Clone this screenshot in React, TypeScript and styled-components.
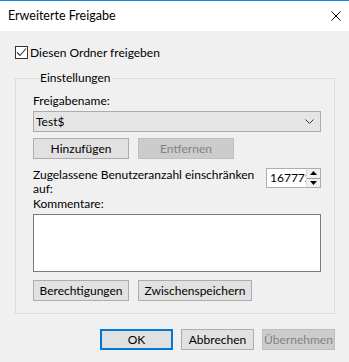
import React from 'react';
import styled, { createGlobalStyle } from 'styled-components';

const GlobalStyle = createGlobalStyle`
    html, body {
        margin: 0;
        padding: 0;
        background: #f0f0f0;
    }
    body {
        font-family: Lato, "Noto Sans", sans-serif;
        font-size: 12px;
        color: #000;
    }
`

const Window = styled.div`
    width: 349px;
    height: 362px;
    box-sizing: border-box;
    border-top: 1px solid #1883d7;
    background: #f0f0f0;
    display: flex;
    flex-direction: column;
`

const TitleBar = styled.div`
    height: 30px;
    background: #fff;
    display: flex;
    align-items: center;
    justify-content: space-between;
    padding: 0 8px;
`

const Title = styled.span`
    font-size: 12.5px;
    line-height: 16px;
`

const CloseIcon = styled.svg`
    width: 10px;
    height: 10px;
`

const Body = styled.div`
    padding: 0 14px 0 15px;
    display: flex;
    flex-direction: column;
`

const CheckRow = styled.label`
    display: flex;
    align-items: center;
    gap: 2px;
    margin-top: 15px;
    height: 13px;
    line-height: 13px;
`

const Box = styled.span`
    width: 13px;
    height: 13px;
    box-sizing: border-box;
    border: 1px solid #333;
    background: #fff;
    display: flex;
    align-items: center;
    justify-content: center;
`

const Group = styled.fieldset`
    margin: 11px 0 0 0;
    width: 320px;
    box-sizing: border-box;
    border: 1px solid #dcdcdc;
    padding: 0 13px 12px 17px;
    display: flex;
    flex-direction: column;
`

const Legend = styled.legend`
    padding: 0 1px;
    margin-left: 6px;
    line-height: 16px;
`

const Label = styled.div<{ $top?: number }>`
    line-height: 16px;
    margin-top: ${p => p.$top ?? 0}px;
`

const Combo = styled.div`
    margin-top: 2px;
    height: 21px;
    box-sizing: border-box;
    border: 1px solid #acacac;
    background: #e5e5e5;
    display: flex;
    align-items: center;
    justify-content: space-between;
    padding: 0 6px 0 2px;
`

const ButtonRow = styled.div<{ $top: number; $gap: number; $end?: boolean }>`
    display: flex;
    gap: ${p => p.$gap}px;
    margin-top: ${p => p.$top}px;
    justify-content: ${p => (p.$end ? 'flex-end' : 'flex-start')};
`

const Button = styled.button<{ $width: number; $primary?: boolean }>`
    width: ${p => p.$width}px;
    height: 21px;
    box-sizing: border-box;
    margin: 0;
    padding: 0;
    font-family: inherit;
    font-size: 12px;
    color: #000;
    background: #e1e1e1;
    border: ${p => (p.$primary ? '2px solid #0078d7' : '1px solid #adadad')};

    &:disabled {
        background: #cccccc;
        border-color: #bfbfbf;
        color: #838383;
    }
`

const LimitRow = styled.div`
    display: flex;
    justify-content: space-between;
    align-items: flex-start;
    margin-top: 9px;
`

const LimitText = styled.div`
    line-height: 14px;
`

const Spin = styled.div`
    width: 55px;
    height: 20px;
    flex-shrink: 0;
    box-sizing: border-box;
    border: 1px solid #adadad;
    background: #fff;
    display: flex;
`

const SpinValue = styled.div`
    flex: 1;
    overflow: hidden;
    white-space: nowrap;
    line-height: 18px;
    padding-left: 3px;
`

const SpinButtons = styled.div`
    width: 13px;
    display: flex;
    flex-direction: column;
    border-left: 1px solid #dcdcdc;
    background: #f0f0f0;
`

const SpinHalf = styled.div<{ $down?: boolean }>`
    flex: 1;
    display: flex;
    align-items: center;
    justify-content: center;
    border-top: ${p => (p.$down ? '1px solid #9a9a9a' : 'none')};
`

const Comments = styled.div`
    margin-top: 2px;
    height: 58px;
    box-sizing: border-box;
    border: 1px solid #7a7a7a;
    background: #fff;
`

export default function App() {
    return (
        <>
            <GlobalStyle />
            <Window>
                <TitleBar>
                    <Title>Erweiterte Freigabe</Title>
                    <CloseIcon viewBox="0 0 10 10">
                        <path d="M0.5 0.5 L9.5 9.5 M9.5 0.5 L0.5 9.5" stroke="#000" strokeWidth="1" fill="none" />
                    </CloseIcon>
                </TitleBar>
                <Body>
                    <CheckRow>
                        <Box>
                            <svg width="11" height="11" viewBox="0 0 11 11">
                                <path d="M1 5.5 L4 8.5 L10 1.5" stroke="#333" strokeWidth="1.1" fill="none" />
                            </svg>
                        </Box>
                        <span>Diesen Ordner freigeben</span>
                    </CheckRow>
                    <Group>
                        <Legend>Einstellungen</Legend>
                        <Label $top={7}>Freigabename:</Label>
                        <Combo>
                            <span>Test$</span>
                            <svg width="9" height="5" viewBox="0 0 9 5">
                                <path d="M0.5 0.5 L4.5 4.5 L8.5 0.5" stroke="#333" strokeWidth="1" fill="none" />
                            </svg>
                        </Combo>
                        <ButtonRow $top={6} $gap={9}>
                            <Button $width={96}>Hinzufügen</Button>
                            <Button $width={96} disabled>Entfernen</Button>
                        </ButtonRow>
                        <LimitRow>
                            <LimitText>
                                Zugelassene Benutzeranzahl einschränken
                                <br />
                                auf:
                            </LimitText>
                            <Spin>
                                <SpinValue>16777216</SpinValue>
                                <SpinButtons>
                                    <SpinHalf>
                                        <svg width="7" height="4" viewBox="0 0 7 4">
                                            <path d="M0 4 L3.5 0 L7 4 Z" fill="#000" />
                                        </svg>
                                    </SpinHalf>
                                    <SpinHalf $down>
                                        <svg width="7" height="4" viewBox="0 0 7 4">
                                            <path d="M0 0 L3.5 4 L7 0 Z" fill="#000" />
                                        </svg>
                                    </SpinHalf>
                                </SpinButtons>
                            </Spin>
                        </LimitRow>
                        <Label $top={0}>Kommentare:</Label>
                        <Comments />
                        <ButtonRow $top={8} $gap={9}>
                            <Button $width={96}>Berechtigungen</Button>
                            <Button $width={114}>Zwischenspeichern</Button>
                        </ButtonRow>
                    </Group>
                    <ButtonRow $top={15} $gap={8} $end>
                        <Button $width={73} $primary>OK</Button>
                        <Button $width={73}>Abbrechen</Button>
                        <Button $width={73} disabled>Übernehmen</Button>
                    </ButtonRow>
                </Body>
            </Window>
        </>
    );
}
